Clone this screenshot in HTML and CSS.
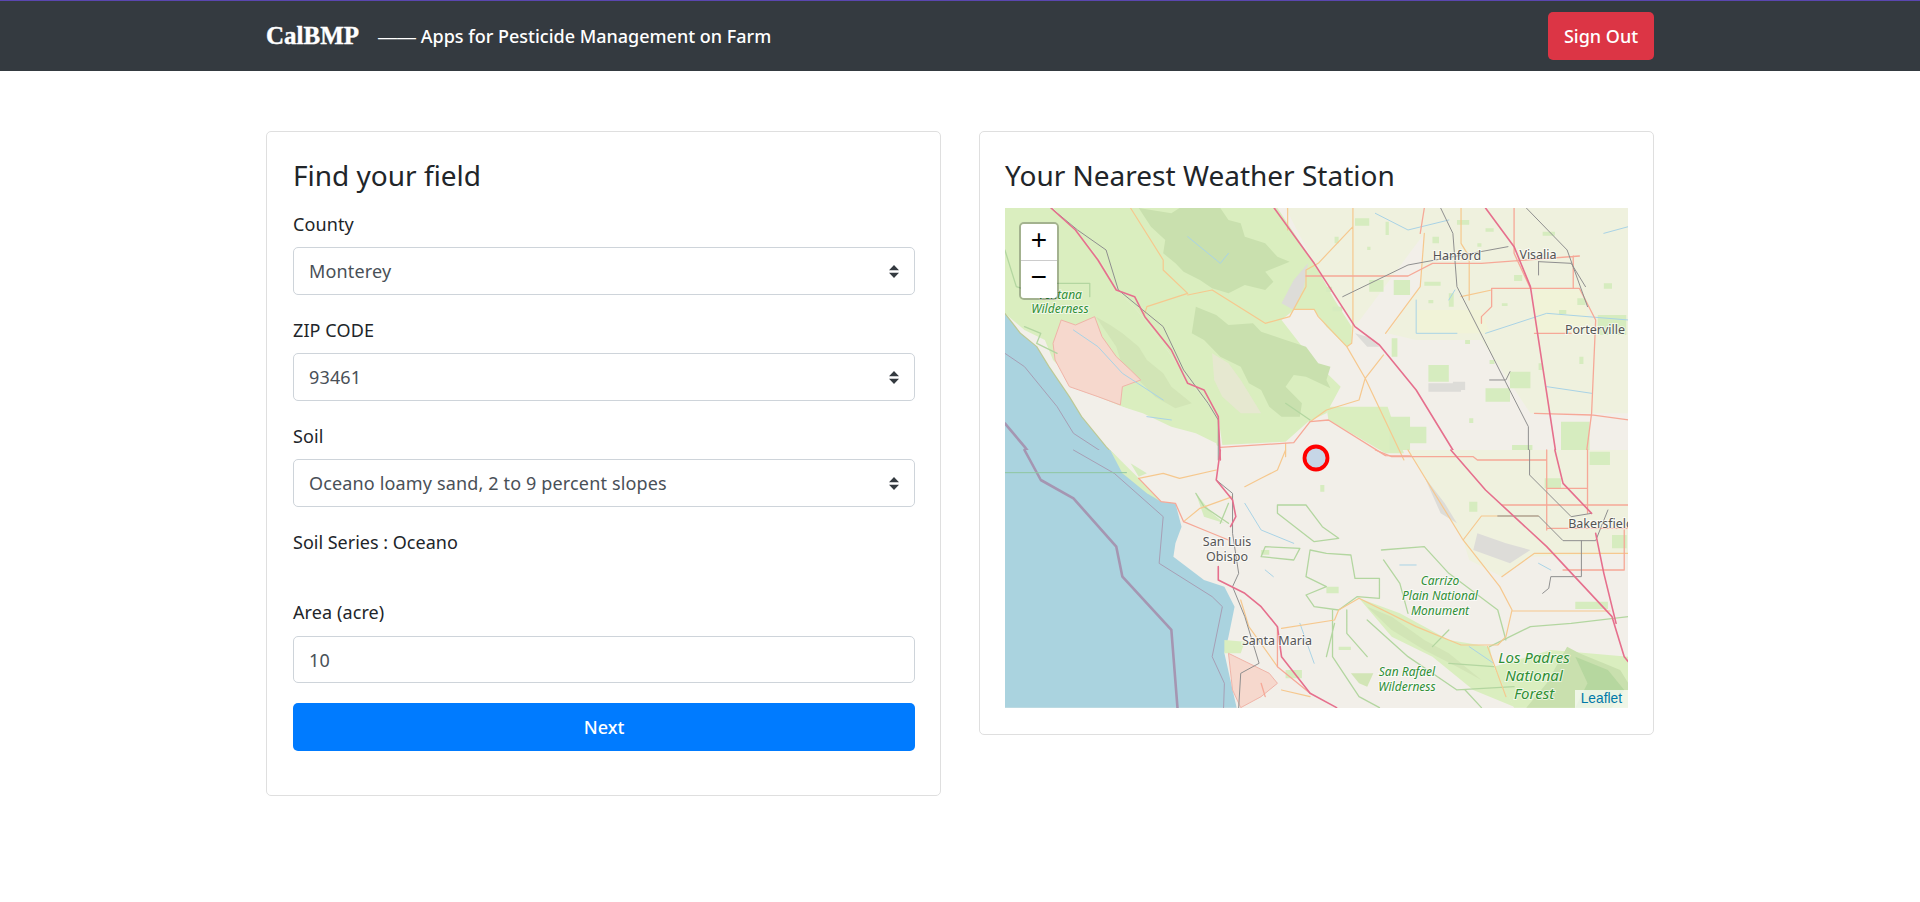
FILE: index.html
```html
<!DOCTYPE html>
<html lang="en">
<head>
    <meta charset="UTF-8">
    <meta name="viewport" content="width=device-width, initial-scale=1.0">
    <title>CalBMP</title>
    <link rel="stylesheet" href="styles.css">
</head>
<body>
    <nav class="navbar">
        <div class="navbar-inner">
            <div class="brand-group">
                <span class="brand">CalBMP</span>
                <span class="tagline"><span class="dash">——</span> Apps for Pesticide Management on Farm</span>
            </div>
            <button class="btn btn-danger">Sign Out</button>
        </div>
    </nav>

    <main class="page">
        <section class="card">
            <h3 class="card-title">Find your field</h3>
            <div class="form-group">
                <label for="county">County</label>
                <select id="county" class="field field-select"><option>Monterey</option></select>
            </div>
            <div class="form-group">
                <label for="zip">ZIP CODE</label>
                <select id="zip" class="field field-select"><option>93461</option></select>
            </div>
            <div class="form-group">
                <label for="soil">Soil</label>
                <select id="soil" class="field field-select"><option>Oceano loamy sand, 2 to 9 percent slopes</option></select>
            </div>
            <p class="soil-series">Soil Series : Oceano</p>
            <div class="form-group form-group-area">
                <label for="area">Area (acre)</label>
                <input id="area" class="field" type="text" value="10">
            </div>
            <button class="btn btn-primary btn-block">Next</button>
        </section>

        <section class="card card-map">
            <h3 class="card-title">Your Nearest Weather Station</h3>
            <div class="map">
                <svg class="map-svg" viewBox="0 0 623 500" width="623" height="500">
                    <rect class="land" width="623" height="500"/>

                    <g class="map-tiles">
                    <!-- top half, traced in crop coordinates -->
                    <g transform="translate(-5,-8) scale(.408,.3333)">
                        <path class="ocean" d="M12 340L50 400L90 440L120 500L170 590L200 650L260 740L290 790H12Z"/>
                        <path class="farm" d="M700 24H1540V640H1300L1180 420H1020L950 400L1030 260L1040 100L870 380L770 190Z"/>
                        <path class="farm-pale" d="M1020 330H1180L1200 400H1020ZM1310 270H1420L1455 400H1310Z"/>
                        <path class="park" d="M12 24H130L185 90L240 170L290 270L350 350L440 500L500 600L535 650L540 740L420 690L340 640L300 620L200 570L130 480L110 420L60 390L12 340Z"/>
                        <path class="land-patch" d="M160 560L230 590L300 620L350 640L420 680L480 700L530 730L540 790H290L240 700L190 620Z"/>
                        <path class="park" d="M130 24H680L770 190L820 300L862 380L862 430L850 440L800 380L770 330H720L690 360L760 470L835 560L800 640L755 665L700 725L545 735L535 650L500 600L440 500L350 350L290 270L240 170L185 90Z"/>
                        <path class="park" d="M800 620H950L990 760H945L805 660Z"/>
                        <path class="hill" d="M340 24L420 40L440 24H540L560 60L590 70L600 110L650 130L680 170L710 185L680 200L650 215L670 245L650 270L600 255L560 280L520 265L490 240L450 215L430 190L400 160L405 120L370 80Z"/>
                        <path class="hill" d="M480 320L530 345L560 375L620 370L640 395L700 420L750 440L780 490L810 500L800 540L810 565L750 530L720 525L700 560L740 610L735 650L690 650L660 620L640 570L610 550L590 500L540 470L500 420L470 400Z"/>
                        <path class="hill-pale" d="M235 350L270 375L300 400L340 440L360 480L400 520L420 560L470 610L430 625L380 590L340 540L300 500L285 440Z"/>
                        <path class="bare" d="M520 460L560 490L590 540L610 580L640 640L590 640L545 590L525 540Z"/>
                        <path class="wild" d="M130 430L150 360L185 375L232 350L250 410L285 470L320 510L345 540L300 560L295 615L240 590L170 560L135 480Z"/>
                        <path class="grey-patch" d="M690 310L720 240L755 190L745 260L720 330ZM870 400L900 410L930 440L900 440ZM1050 550H1130V575H1050ZM1110 545h30v25h-30z"/>
                        <path class="patch" d="M870 55h35v22h-35zM900 140h8v10h-8zM945 65h8v40h-8zM965 240h40v45h-40zM800 260h14v16h-14zM815 320h24v14h-24zM905 240h35v35h-35zM1040 245h40v12h-40zM1120 60h30v14h-30zM1190 85h20v10h-20zM1260 225h20v18h-20zM1330 95h30v12h-30zM1415 295h20v20h-20zM1050 495h50v50h-50zM960 415h14v55h-14zM1250 515h50v50h-50zM1190 565h60v40h-60zM1375 665h70v110h-70zM1255 735h50v45h-50zM1465 345h70v60h-70zM955 650h50v100h-50zM1005 680h40v50h-40zM1150 655h10v14h-10zM1060 110h16v20h-16zM1170 130h10v10h-10zM820 110h10v20h-10zM1050 300h12v10h-12zM1100 280h12v40h-12zM1230 310h14v8h-14zM1370 330h18v12h-18zM1480 250h20v16h-20zM1140 420h12v12h-12zM1320 490h10v20h-10zM1200 480h12v12h-12zM1420 470h10v22h-10z"/>
                        <g class="lines">
                            <path class="coast" d="M12 340L50 400L90 440L120 500L170 590L200 650L260 740L290 780"/>
                            <path class="park-line" d="M90 250H220V290M12 150L40 260L90 280M60 380L100 400L90 430L140 460M700 610L760 660"/>
                            <path class="river" d="M180 390L240 440L300 520L400 600M1020 300V400H1120M1190 400L1340 340L1540 360M1340 560L1450 580M1480 100L1540 80M920 40L1000 90L1100 60M360 650L420 660M460 110L480 130L540 190L560 160M1100 300L1115 270"/>
                            <path class="prim" d="M320 24L400 180V210L460 280L360 320L355 340M460 285L520 270L650 370L710 350L750 260V210L780 190L865 80V380M865 24V80M720 328H770L780 350L850 440L895 535L990 780M865 380L862 430L850 440M945 400L1030 260L1040 100M940 465L895 535L880 600L800 630L760 665M705 24V90M1130 24V130L1150 170M1150 170V300M1130 290L1205 270M700 730V770"/>
                            <path class="trunk" d="M540 742L720 728L760 665L805 660L945 767L1150 770L1160 780H1360M750 228H1000L1060 190H1180L1420 168M1260 24V160L1300 265H1420L1460 360L1450 640L1435 780M1040 24L1030 100M1300 265H1205V320L1180 350V370M1310 400H1400M1310 640L1450 645L1540 660M1405 168V265"/>
                            <path class="rail" d="M125 24L190 90L260 150L290 270L350 330L400 380L450 510L510 610L535 660V780M1080 24L1110 100L1120 260L1295 680V780M1290 24L1390 150L1440 320M840 290L1000 195L1245 140M1320 185L1400 190L1435 260M1200 540H1240L1250 515M1320 185V225"/>
                            <path class="motor" d="M672 24L770 190L870 380L930 435L1020 570L1125 780M125 24L185 90L240 180L285 270L330 290L355 350L420 450L460 550L500 570L535 650L540 780M1190 24L1260 140L1300 260L1365 780"/>
                            <path class="county" d="M12 460L60 500L140 620L180 700L280 780"/>
                            <path class="state" d="M12 670L60 740L85 780"/>
                        </g>
                    </g>

                    <!-- bottom half -->
                    <g transform="translate(-5,242) scale(.408,.3333)">
                        <path class="ocean" d="M12 0H270L310 60L395 155L430 160L445 230L430 280L425 320L500 390L550 410L575 470L560 560L550 610L580 773H12Z"/>
                        <path class="farm" d="M1000 0H1540V310L1300 320L1230 380L1150 330L1135 270Z"/>
                        <path class="park" d="M270 0L340 85L395 155L360 130L300 70Z"/>
                        <path class="park" d="M880 445L980 490L1100 570L1200 590L1210 650L1260 770L1160 720L1060 620L960 560Z"/>
                        <path class="hill-pale" d="M900 470L960 500L1040 570L1100 610L1180 690L1120 650L1040 600L960 540Z"/>
                        <path class="park" d="M1210 650L1350 600L1540 620V773H1260Z"/>
                        <path class="hill" d="M1390 590L1420 610L1480 640L1520 660L1540 700V773H1290L1340 700Z"/>
                        <path class="hill-dark" d="M1410 620L1490 660L1530 720L1500 773H1410L1440 700Z"/>
                        <path class="hill-pale" d="M860 670H915L900 710L880 700Z"/>
                        <path class="park" d="M550 570L600 575L590 610H550Z"/>
                        <path class="wild" d="M560 610L660 670L680 700L640 740L590 773L570 720Z"/>
                        <path class="grey-patch" d="M1040 80L1090 160L1120 220L1080 190ZM1170 250L1240 280L1300 300L1250 340L1160 300Z"/>
                        <path class="patch" d="M480 130L520 190L550 220L500 200ZM1335 85h40v30h-40zM1445 5h50v40h-50zM1410 455h80v22h-80zM1150 155h20v30h-20zM1500 255h36v40h-36zM640 300h20v14h-20zM785 105h10v20h-10zM320 40L360 70L340 80ZM830 590h30v10h-30zM700 660h40v25h-40zM800 410h30v20h-30z"/>
                        <g class="lines">
                            <path class="park-line" d="M680 165H750L790 230L830 265L770 275L680 190ZM480 130L500 170L560 220M650 290L735 295L720 330L640 320ZM760 300L800 310L860 315L870 385H930V445L875 440L830 480L770 470L750 435L800 410L750 380ZM935 300L1040 290L1100 370L1220 480L1240 570M815 480V620L880 740L930 773M900 510L1000 620L1120 720L1260 710M1200 590L1300 530L1400 520L1540 500M850 480V550L900 620M1060 590L1100 540M1210 650L1100 640M560 160L540 220M820 520L800 620M940 330L980 400L1000 490M1140 720L1180 773"/>
                            <path class="river" d="M600 160L640 240L720 280M980 345H1020M650 360L670 380M735 520L770 640M1150 590L1210 640M1320 340L1350 360"/>
                            <path class="prim" d="M1000 0L1135 270L1225 410L1255 480L1240 560L1220 585L1130 585L1020 530L880 445L830 480L820 510L690 535M340 85L400 70L440 85L530 60M600 110L640 85L680 60L700 0M450 215L490 175L570 140M1135 270L1180 198H1320M1230 380L1310 310H1540M1255 483H1495M690 720L760 740M590 450L610 530L680 650M1195 590L1240 740"/>
                            <path class="trunk" d="M340 85L395 155L430 160L450 215L500 240L560 270M920 0L960 20H1160L1170 30H1340M1340 115H1440M1230 165H1540M1340 235H1540M1530 240V360M1340 0V240M1440 0V190M1380 360H1530M680 530L680 650L760 730M650 740L640 700"/>
                            <path class="rail" d="M1220 198H1320L1380 272H1460L1490 180M1425 272V380H1350L1345 415L1330 430M1298 0V75L1400 200L1450 190M530 90L570 130L570 250L585 370L570 410L600 500L635 640L590 670L585 773"/>
                            <path class="motor" d="M1105 0L1190 120L1340 290L1500 500L1530 620L1540 635M540 0L530 90L570 150L578 200L565 230M535 350V390L600 430L640 470L680 530L690 620L760 730L825 773M1360 0L1380 100L1450 190M1460 250L1480 370L1510 520"/>
                            <path class="county" d="M180 0L280 70L400 200L390 340L520 440L545 470L520 620L550 700L548 773"/>
                            <path class="state" d="M60 0L100 90L180 145L285 290L300 380L420 540L435 773"/>
                            <path class="sea-line" d="M12 68H310"/>
                        </g>
                    </g>
                    </g>

                    <g class="labels">
                        <text class="city" x="452" y="52">Hanford</text>
                        <text class="city" x="533" y="51">Visalia</text>
                        <text class="city" x="590" y="126">Porterville</text>
                        <text class="city" x="596" y="320">Bakersfield</text>
                        <text class="city" x="222" y="338">San Luis</text>
                        <text class="city" x="222" y="353">Obispo</text>
                        <text class="city" x="272" y="437">Santa Maria</text>
                        <text class="wild-name" x="55" y="91">Ventana</text>
                        <text class="wild-name" x="55" y="105">Wilderness</text>
                        <text class="wild-name" x="435" y="377">Carrizo</text>
                        <text class="wild-name" x="435" y="392">Plain National</text>
                        <text class="wild-name" x="435" y="407">Monument</text>
                        <text class="wild-name" x="402" y="468">San Rafael</text>
                        <text class="wild-name" x="402" y="483">Wilderness</text>
                        <text class="wild-name big" x="529" y="455">Los Padres</text>
                        <text class="wild-name big" x="529" y="473">National</text>
                        <text class="wild-name big" x="529" y="491">Forest</text>
                    </g>

                    <circle class="station" cx="311" cy="250" r="11.5"/>
                </svg>

                <div class="zoom-control">
                    <span class="zoom-btn">+</span>
                    <span class="zoom-btn">−</span>
                </div>
                <div class="attribution"><a href="#">Leaflet</a></div>
            </div>
        </section>
    </main>
</body>
</html>
```

FILE: styles.css
```css
* {
    box-sizing: border-box;
}
body {
    margin: 0;
    font-family: "Noto Sans", sans-serif;
    font-size: 18px;
    color: #212529;
    background-color: #fff;
}
.navbar {
    height: 71px;
    background-color: #343a40;
    border-top: 1px solid #5a46b0;
}
.navbar-inner {
    width: 1388px;
    height: 70px;
    margin: 0 auto;
    display: flex;
    align-items: center;
    justify-content: space-between;
}
.brand-group {
    display: flex;
    align-items: center;
    gap: 19px;
}
.brand {
    font-family: "Liberation Serif", serif;
    font-weight: bold;
    font-size: 25px;
    color: #fff;
    -webkit-text-stroke: .4px #fff;
}
.tagline {
    font-size: 18px;
    font-weight: 500;
    color: #fff;
}
.dash {
    font-family: "Liberation Sans", sans-serif;
    font-size: 19px;
    font-weight: 400;
}
.btn {
    font-family: inherit;
    font-size: 18px;
    font-weight: 500;
    color: #fff;
    border: none;
    border-radius: 5px;
    height: 48px;
    padding: 0;
    white-space: nowrap;
    cursor: pointer;
}
.btn-danger {
    background-color: #dc3545;
    width: 106px;
}
.btn-primary {
    background-color: #007bff;
}
.btn-block {
    display: block;
    width: 100%;
}
.page {
    width: 1388px;
    margin: 60px auto 0;
    display: grid;
    grid-template-columns: 675px 675px;
    gap: 38px;
    align-items: start;
}
.card {
    border: 1px solid #dfdfdf;
    border-radius: 5px;
    padding: 25px 25px 44px 26px;
}
.card-map {
    padding-left: 25px;
    padding-bottom: 26px;
}
.card-title {
    margin: 0 0 15px;
    font-size: 28px;
    font-weight: 400;
    line-height: 37px;
}
.card-map .card-title {
    margin-bottom: 14px;
}
.form-group {
    margin-bottom: 20px;
}
label {
    display: block;
    line-height: 30px;
    margin-bottom: 8px;
    letter-spacing: .1px;
}
.field {
    display: block;
    width: 100%;
    height: 48px;
    padding: 0 15px;
    font-family: inherit;
    font-size: 18px;
    letter-spacing: .15px;
    color: #495057;
    background-color: #fff;
    border: 1px solid #ced4da;
    border-radius: 5px;
}
.field-select {
    appearance: none;
    background-image: url("data:image/svg+xml,%3csvg xmlns='http://www.w3.org/2000/svg' viewBox='0 0 4 5'%3e%3cpath fill='%23343a40' d='M2 0L0 2h4zm0 5L0 3h4z'/%3e%3c/svg%3e");
    background-repeat: no-repeat;
    background-position: right 15px center;
    background-size: 10px 12.5px;
}
.form-group-area label {
    margin-bottom: 9px;
}
.form-group-area .field {
    height: 47px;
}
.soil-series {
    margin: 0 0 40px;
    line-height: 30px;
}

/* map */
.map {
    position: relative;
    width: 623px;
    height: 500px;
    overflow: hidden;
}
.map-svg {
    display: block;
}
.map-tiles {
    filter: blur(.35px);
}
.land { fill: #f2efe9; }
.land-patch { fill: #f2efe9; }
.ocean { fill: #aad3df; }
.farm { fill: #eff1de; }
.farm-pale { fill: #f1f3d8; }
.park { fill: #daeebf; }
.hill { fill: #c9e0ae; }
.hill-pale { fill: #d2e5b6; }
.hill-dark { fill: #b6d79f; }
.bare { fill: #e6e8d0; }
.wild { fill: #f6d8cd; stroke: #efb4a8; stroke-width: 1; vector-effect: non-scaling-stroke; }
.grey-patch { fill: #dddcd8; }
.patch { fill: #d6ecbf; }
.lines path {
    fill: none;
    vector-effect: non-scaling-stroke;
    stroke-linejoin: round;
    stroke-linecap: round;
}
.coast { stroke: #bcc996; stroke-width: 1.2; }
.river { stroke: #a9d3e6; stroke-width: 1; }
.prim { stroke: #f6c88e; stroke-width: 1.2; }
.trunk { stroke: #f6a897; stroke-width: 1.3; }
.rail { stroke: #8f8f8f; stroke-width: 1; }
.motor { stroke: #e66f8d; stroke-width: 1.6; }
.county { stroke: #a79fb5; stroke-width: 1; }
.state { stroke: #a596b2; stroke-width: 2.6; }
.sea-line { stroke: #8fc7a0; stroke-width: 1; }
.park-line { stroke: #b3d6a0; stroke-width: 1.3; }
.labels text {
    text-anchor: middle;
    font-family: "Noto Sans", sans-serif;
    paint-order: stroke;
    stroke: rgba(255, 255, 255, .65);
    stroke-width: 2px;
}
.city {
    font-size: 12.5px;
    fill: #555;
}
.wild-name {
    font-size: 12px;
    font-style: italic;
    fill: #2f8f35;
}
.wild-name.big {
    font-size: 15px;
}
.station {
    fill: #c6d6e7;
    stroke: #f00;
    stroke-width: 3.8;
}
.zoom-control {
    position: absolute;
    top: 14px;
    left: 14px;
    width: 40px;
    border: 2px solid rgba(0, 0, 0, .25);
    border-radius: 5px;
    background-clip: padding-box;
}
.zoom-btn {
    display: block;
    height: 37px;
    line-height: 36px;
    text-align: center;
    background-color: #fff;
    color: #000;
    font-family: "Liberation Mono", monospace;
    font-size: 28px;
}
.zoom-btn:first-child {
    border-bottom: 1px solid #ccc;
    border-radius: 3px 3px 0 0;
}
.zoom-btn:last-child {
    border-radius: 0 0 3px 3px;
}
.attribution {
    position: absolute;
    right: 0;
    bottom: 0;
    padding: 0 6px;
    font-family: "Liberation Sans", Arial, sans-serif;
    font-size: 13.75px;
    line-height: 18px;
    background-color: rgba(255, 255, 255, .7);
}
.attribution a {
    color: #0078a8;
    text-decoration: none;
}
```
